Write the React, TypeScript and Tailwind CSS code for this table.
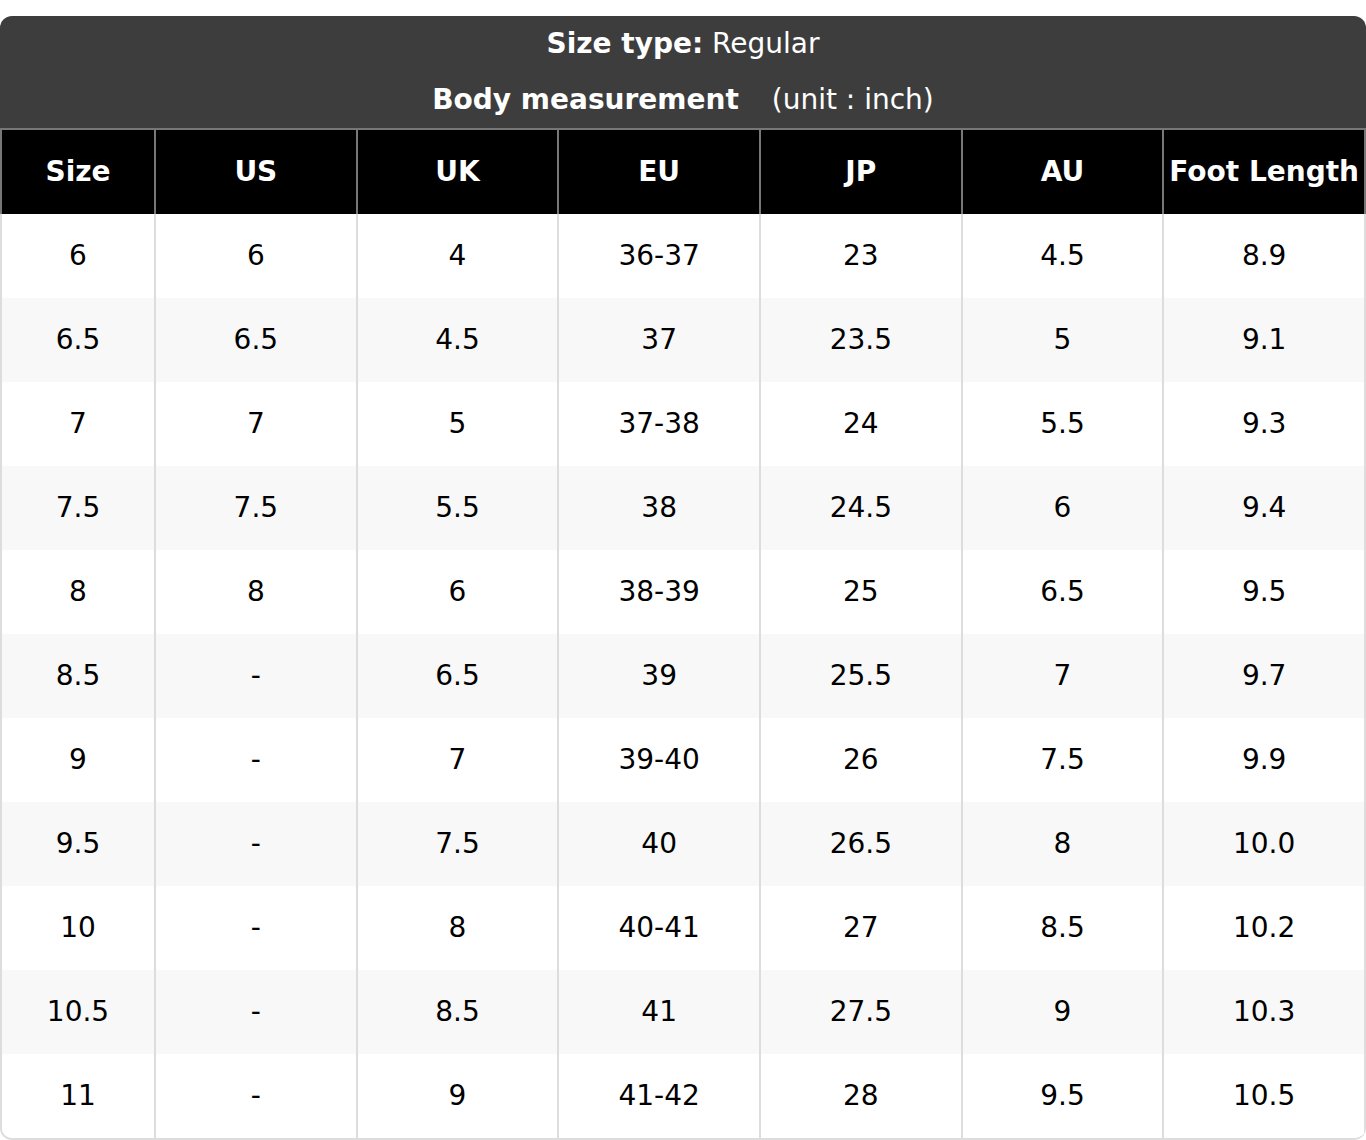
import React from "react";

const headers = ["Size", "US", "UK", "EU", "JP", "AU", "Foot Length"];
const rows: string[][] = [
  ["6", "6", "4", "36-37", "23", "4.5", "8.9"],
  ["6.5", "6.5", "4.5", "37", "23.5", "5", "9.1"],
  ["7", "7", "5", "37-38", "24", "5.5", "9.3"],
  ["7.5", "7.5", "5.5", "38", "24.5", "6", "9.4"],
  ["8", "8", "6", "38-39", "25", "6.5", "9.5"],
  ["8.5", "-", "6.5", "39", "25.5", "7", "9.7"],
  ["9", "-", "7", "39-40", "26", "7.5", "9.9"],
  ["9.5", "-", "7.5", "40", "26.5", "8", "10.0"],
  ["10", "-", "8", "40-41", "27", "8.5", "10.2"],
  ["10.5", "-", "8.5", "41", "27.5", "9", "10.3"],
  ["11", "-", "9", "41-42", "28", "9.5", "10.5"],
];

export default function App() {
  return (
    <div
      className="w-[1366px] h-[1140px] bg-white pt-4"
      style={{ fontFamily: '"DejaVu Sans", "Liberation Sans", sans-serif' }}
    >
      <div className="flex flex-col">
        <div className="bg-[#3d3d3d] rounded-t-[12px] h-[112px] flex flex-col items-center text-white text-[28px]">
          <div className="h-[56px] leading-[56px]">
            <span className="font-bold">Size type:</span> Regular
          </div>
          <div className="h-[56px] leading-[56px]">
            <span className="font-bold">Body measurement</span>
            <span className="ml-[33px]">(unit : inch)</span>
          </div>
        </div>
        <div className="grid grid-cols-[154px_repeat(6,1fr)] bg-black border-t-2 border-l-2 border-[#777] text-white text-[28px] font-bold">
          {headers.map((h) => (
            <div
              key={h}
              className="h-[84px] flex items-center justify-center border-r-2 border-[#777] whitespace-nowrap"
            >
              {h}
            </div>
          ))}
        </div>
        <div className="border-l-2 border-b-2 border-[#dddddd] rounded-b-[12px] overflow-hidden">
          {rows.map((r, i) => (
            <div
              key={i}
              className={
                i % 2 === 1
                  ? "grid grid-cols-[154px_repeat(6,1fr)] bg-[#f8f8f8] text-black text-[28px]"
                  : "grid grid-cols-[154px_repeat(6,1fr)] bg-white text-black text-[28px]"
              }
            >
              {r.map((c, j) => (
                <div
                  key={j}
                  className="h-[84px] flex items-center justify-center border-r-2 border-[#dddddd]"
                >
                  {c}
                </div>
              ))}
            </div>
          ))}
        </div>
      </div>
    </div>
  );
}
